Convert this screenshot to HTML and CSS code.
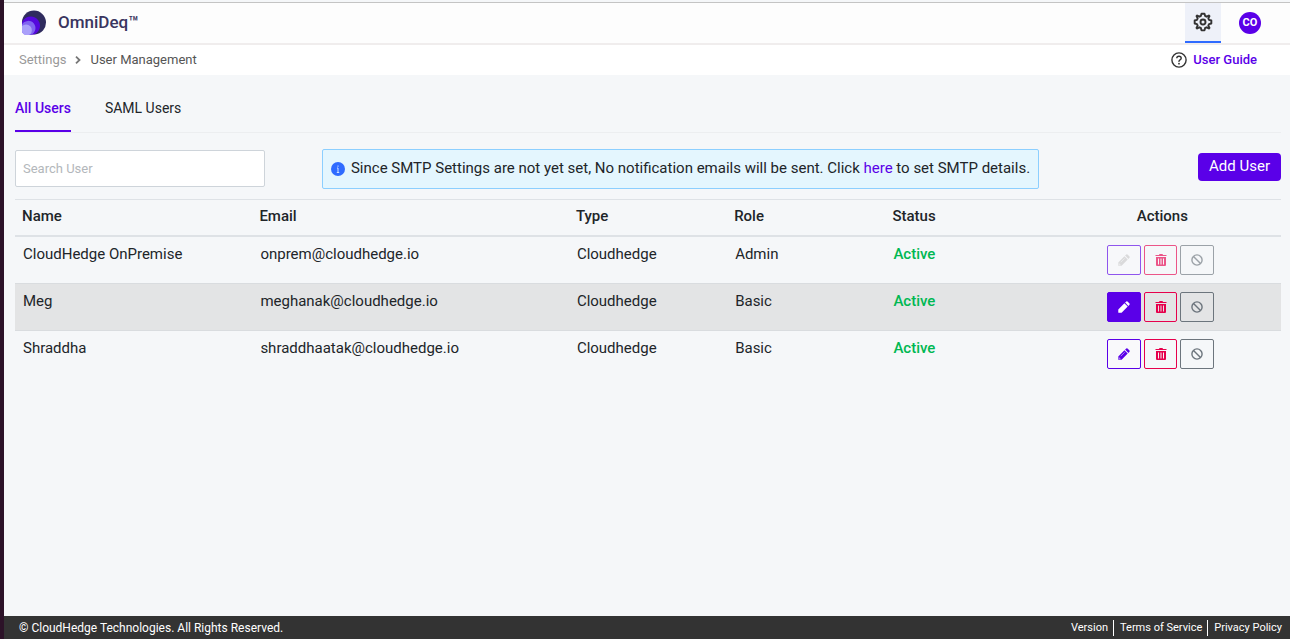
FILE: index.html
```html
<!DOCTYPE html>
<html lang="en">
<head>
<meta charset="utf-8">
<title>OmniDeq - User Management</title>
<link rel="stylesheet" href="styles.css">
</head>
<body>
<svg class="symbols" aria-hidden="true">
  <symbol id="pencil" viewBox="0 0 12 12"><path fill="currentColor" d="M0.3 11.7V8.4L6.4 2.3L9.7 5.6L3.6 11.7ZM7.1 1.6L8.3 0.5Q8.9 0 9.5 0.5L11.5 2.5Q12 3.1 11.5 3.7L10.4 4.9Z"/><path class="cut" d="M2.8 8.2L6.7 4.3M1.2 9.4V10.8H2.6"/></symbol>
  <symbol id="trash" viewBox="0 0 12 12"><path fill="currentColor" fill-rule="evenodd" d="M0.5 1H4L4.5 0H7.5L8 1H11.5V2H0.5ZM1 3H11V11Q11 12 10 12H2Q1 12 1 11ZM3 4.5V10.5H4V4.5ZM5.5 4.5V10.5H6.5V4.5ZM8 4.5V10.5H9V4.5Z"/></symbol>
  <symbol id="ban" viewBox="0 0 12 12"><g fill="none" stroke="currentColor" stroke-width="1.4"><circle cx="6" cy="6" r="5.1"/><path d="M2.5 2.5L9.5 9.5"/></g></symbol>
</svg>
<div class="app">
  <header class="topbar">
    <div class="brand">
      <svg class="logo" viewBox="0 0 24 25" aria-hidden="true"><path fill="#2f2b5e" d="M0 12A12 12 0 1 1 13 24.5Q6 25 0 18Z"/><path fill="#5508dc" d="M0 12.5A9.3 9.3 0 1 1 13 24Q8 25.5 3 24.5L0 22Z"/><path fill="#8064f0" d="M0 14.5A7.2 7.2 0 1 1 9 24.7H3L0 22Z"/><path fill="#aaa0fa" d="M0 16A5.7 5.7 0 1 1 8 24.5Q5 25.5 2 24.5Q0 23.5 0 21Z"/></svg>
      <span>OmniDeq™</span>
    </div>
    <nav class="tools">
      <button class="gear" aria-label="Settings"><svg viewBox="0 0 24 24" aria-hidden="true"><g fill="none" stroke="#333" stroke-width="2.3" stroke-linejoin="round"><circle cx="12" cy="12" r="3"/><path d="M10.2 2H13.8L14.6 4.8L16.4 5.6L19 4.2L19.8 5L18.4 7.6L19.2 9.4L22 10.2V13.8L19.2 14.6L18.4 16.4L19.8 19L19 19.8L16.4 18.4L14.6 19.2L13.8 22H10.2L9.4 19.2L7.6 18.4L5 19.8L4.2 19L5.6 16.4L4.8 14.6L2 13.8V10.2L4.8 9.4L5.6 7.6L4.2 5L5 4.2L7.6 5.6L9.4 4.8Z"/></g></svg></button>
      <button class="avatar">CO</button>
    </nav>
  </header>
  <div class="crumbbar">
    <nav class="crumbs" aria-label="Breadcrumb">
      <a href="#">Settings</a>
      <svg class="chevron" viewBox="0 0 6 8" aria-hidden="true"><path d="M1 0.7L4.5 4L1 7.3" fill="none" stroke="#777" stroke-width="1.8"/></svg>
      <span>User Management</span>
    </nav>
    <a class="guide" href="#"><svg viewBox="0 0 16 16" aria-hidden="true"><g fill="none" stroke="#333" stroke-width="1.4"><circle cx="8" cy="8" r="7.1"/><path d="M5.8 6.3Q5.8 4.3 8 4.3T10.2 6.2Q10.2 7.2 9 7.9T8 9.8"/></g><circle cx="8" cy="11.7" r=".9" fill="#333"/></svg><span>User Guide</span></a>
  </div>
  <main class="content">
    <nav class="tabs">
      <a class="tab current" href="#">All Users</a>
      <a class="tab" href="#">SAML Users</a>
    </nav>
    <div class="actions-bar">
      <input class="search" type="text" placeholder="Search User" aria-label="Search User">
      <div class="notice"><svg viewBox="0 0 14 14" aria-hidden="true"><circle cx="7" cy="7" r="7" fill="#2f6bff"/><path d="M7 6V10.5M7 3.5V4.8M6 6H7M5.8 10.5H8.2" stroke="#cfe0ff" fill="none"/></svg><p>Since SMTP Settings are not yet set, No notification emails will be sent. Click <a href="#">here</a> to set SMTP details.</p></div>
      <button class="add">Add User</button>
    </div>
    <table class="users">
      <thead><tr><th class="wide-name">Name</th><th class="wide-email">Email</th><th>Type</th><th>Role</th><th>Status</th><th class="wide-actions">Actions</th></tr></thead>
      <tbody>
        <tr><td>CloudHedge OnPremise</td><td>onprem@cloudhedge.io</td><td>Cloudhedge</td><td>Admin</td><td class="active">Active</td><td><div class="buttons">
          <button class="act edit" disabled aria-label="Edit"><svg><use href="#pencil"/></svg></button><button class="act delete" disabled aria-label="Delete"><svg><use href="#trash"/></svg></button><button class="act block" disabled aria-label="Disable"><svg><use href="#ban"/></svg></button></div></td></tr>
        <tr class="hovered"><td>Meg</td><td>meghanak@cloudhedge.io</td><td>Cloudhedge</td><td>Basic</td><td class="active">Active</td><td><div class="buttons">
          <button class="act edit filled" aria-label="Edit"><svg><use href="#pencil"/></svg></button><button class="act delete" aria-label="Delete"><svg><use href="#trash"/></svg></button><button class="act block" aria-label="Disable"><svg><use href="#ban"/></svg></button></div></td></tr>
        <tr><td>Shraddha</td><td>shraddhaatak@cloudhedge.io</td><td>Cloudhedge</td><td>Basic</td><td class="active">Active</td><td><div class="buttons">
          <button class="act edit" aria-label="Edit"><svg><use href="#pencil"/></svg></button><button class="act delete" aria-label="Delete"><svg><use href="#trash"/></svg></button><button class="act block" aria-label="Disable"><svg><use href="#ban"/></svg></button></div></td></tr>
      </tbody>
    </table>
  </main>
  <footer class="footer">
    <span class="copyright">© CloudHedge Technologies. All Rights Reserved.</span>
    <nav class="legal"><a href="#">Version</a><a href="#">Terms of Service</a><a href="#">Privacy Policy</a></nav>
  </footer>
</div>
</body>
</html>
```

FILE: styles.css
```css
* { box-sizing: border-box; }
body { margin: 0; font: 15px/21px Roboto, "Liberation Sans", sans-serif; color: #212529; }
a { text-decoration: none; color: inherit; }
button { font: inherit; padding: 0; }
svg { display: block; flex: none; }
.symbols { display: none; }
.app { min-height: 100vh; display: flex; flex-direction: column; padding-top: 2px; background: #f5f7f9; border-left: 4px solid #2c1228; }
.topbar { height: 43px; display: flex; justify-content: space-between; background: #fdfdfd; border-bottom: 2px solid #f0eded; border-top: 1px solid #c4c4c4; padding: 0 29px 0 18px; }
.brand { display: flex; align-items: center; gap: 12px; padding-bottom: 2px; font-size: 17px; font-weight: 500; color: #3a3560; }
.logo { width: 24px; height: 25px; }
.tools { display: flex; align-items: center; gap: 18px; }
.gear { width: 36px; height: 100%; display: grid; place-items: center; border: 0; border-bottom: 2px solid #2f6bff; background: #eef1f9; }
.gear svg { width: 20px; height: 20px; }
.avatar { width: 22px; height: 22px; border: 0; border-radius: 50%; background: #5a00e8; color: #fff; font-size: 11px; font-weight: 700; line-height: 22px; }
.crumbbar { height: 30px; display: flex; align-items: center; justify-content: space-between; padding: 0 33px 1px 15px; background: #fff; font-size: 13px; }
.crumbs { display: flex; align-items: center; gap: 9px; color: #555; }
.crumbs a { color: #999; }
.chevron { width: 6px; height: 8px; }
.guide { display: flex; align-items: center; gap: 6px; color: #5a00e8; font-weight: 500; }
.guide svg { width: 16px; height: 16px; }
.content { flex: 1; padding: 14px 9px 0 11px; }
.tabs { display: flex; gap: 34px; border-bottom: 1px solid #eceef0; font-size: 14px; }
.tab { height: 43px; padding-top: 9px; }
.current { color: #5a00e8; border-bottom: 2px solid #5a00e8; font-weight: 500; }
.actions-bar { display: flex; align-items: flex-start; justify-content: space-between; padding: 16px 0 10px; }
.search { width: 250px; height: 37px; margin-top: 1px; padding: 0 7px; border: 1px solid #ced4da; border-radius: 2px; background: #fff; font: 13px Roboto, sans-serif; }
.search::placeholder { color: #b3b7bb; }
.notice { min-height: 40px; display: flex; align-items: center; gap: 6px; padding: 0 8px; margin-right: 102px; border: 1px solid #8ccfff; border-radius: 2px; background: #e4f6fe; }
.notice svg { width: 14px; height: 14px; }
.notice p { margin: 0; padding-bottom: 2px; }
.notice a { color: #5a00e8; }
.add { height: 28px; padding: 0 11px 2px; margin-top: 4px; border: 0; border-radius: 4px; background: #5a00e8; color: #fff; }
.users { width: 100%; table-layout: fixed; border-collapse: separate; border-spacing: 0; }
.users th { height: 38px; padding: 0 7px 2px; text-align: left; font-weight: 500; border-top: 1px solid #dee2e6; border-bottom: 2px solid #dee2e6; }
.users td { height: 47px; padding: 7px 8px 0; vertical-align: top; border-bottom: 1px solid #d9dcdf; }
.users tbody tr:last-child td { border-bottom: 0; }
.wide-name { width: 18.75%; }
.wide-email { width: 25%; }
.users .wide-actions { width: 18.75%; text-align: center; }
.hovered { background: #e3e4e5; }
.users .active { color: #00b852; font-weight: 500; }
.buttons { display: flex; justify-content: center; gap: 3px; padding-top: 1px; margin-right: 3px; }
.act { width: 34px; height: 30px; display: grid; place-items: center; border: 1px solid currentColor; border-radius: 2px; background: transparent; }
.act svg { width: 12px; height: 12px; }
.edit { color: #5a00e8; background: #f9f9fb; }
.delete { width: 33px; color: #e6004c; }
.block { color: #6c757d; }
.act:disabled { opacity: 0.65; }
.edit:disabled svg { color: #ccc; }
.filled { border-color: #5a00e8; background: #5a00e8; color: #fff; }
.cut { fill: none; stroke: #fff; stroke-width: 0.7; opacity: 0.7; }
.filled .cut, .filled use { stroke: none; }
.footer { min-height: 23px; display: flex; align-items: center; justify-content: space-between; padding: 0 8px 0 15px; background: #333; color: #fff; font-size: 11px; line-height: 16px; }
.copyright { font-size: 12px; }
.legal { display: flex; }
.legal a + a { margin-left: 5px; padding-left: 6px; border-left: 1px solid #fff; }
```
